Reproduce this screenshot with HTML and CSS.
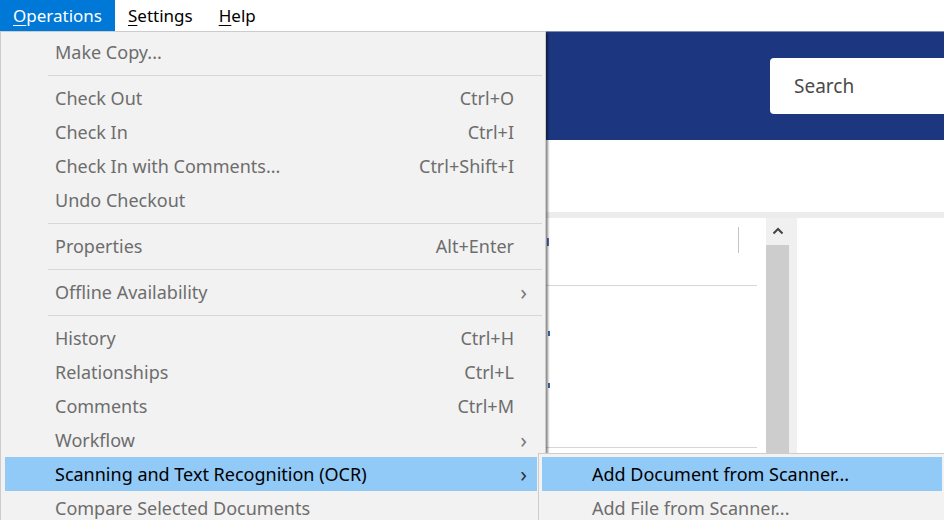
FILE: index.html
```html
<!DOCTYPE html>
<html lang="en">
<head>
<meta charset="utf-8">
<title>Documents</title>
<link rel="stylesheet" href="styles.css">
</head>
<body>
<div class="app">
  <nav class="menubar">
    <span class="menubar-item is-open"><u>O</u>perations</span>
    <span class="menubar-item"><u>S</u>ettings</span>
    <span class="menubar-item"><u>H</u>elp</span>
  </nav>

  <header class="masthead">
    <div class="search">Search</div>
  </header>

  <div class="toolbar"></div>

  <div class="workspace">
    <section class="list">
      <div class="list-head">
        <span class="col-mark"></span>
        <span class="col-divider"></span>
      </div>
      <div class="list-rows">
        <span class="row-mark mark-a"></span>
        <span class="row-mark mark-b"></span>
      </div>
    </section>
    <div class="scrollbar">
      <div class="scroll-up">
        <svg width="12" height="8" viewBox="0 0 12 8"><path d="M1.5 6.5 L6 2 L10.5 6.5" fill="none" stroke="#444" stroke-width="2"/></svg>
      </div>
      <div class="scroll-track"><div class="scroll-thumb"></div></div>
    </div>
    <section class="preview"></section>
  </div>
</div>

<!-- Operations dropdown -->
<div class="menu menu-main">
  <div class="item disabled"><span class="label">Make Copy...</span></div>
  <div class="sep"></div>
  <div class="item disabled"><span class="label">Check Out</span><span class="key">Ctrl+O</span></div>
  <div class="item disabled"><span class="label">Check In</span><span class="key">Ctrl+I</span></div>
  <div class="item disabled"><span class="label">Check In with Comments...</span><span class="key">Ctrl+Shift+I</span></div>
  <div class="item disabled"><span class="label">Undo Checkout</span></div>
  <div class="sep"></div>
  <div class="item disabled"><span class="label">Properties</span><span class="key">Alt+Enter</span></div>
  <div class="sep"></div>
  <div class="item disabled has-sub"><span class="label">Offline Availability</span><span class="arrow">&#8250;</span></div>
  <div class="sep"></div>
  <div class="item disabled"><span class="label">History</span><span class="key">Ctrl+H</span></div>
  <div class="item disabled"><span class="label">Relationships</span><span class="key">Ctrl+L</span></div>
  <div class="item disabled"><span class="label">Comments</span><span class="key">Ctrl+M</span></div>
  <div class="item disabled has-sub"><span class="label">Workflow</span><span class="arrow">&#8250;</span></div>
  <div class="item active has-sub"><span class="label">Scanning and Text Recognition (OCR)</span><span class="arrow">&#8250;</span></div>
  <div class="item disabled"><span class="label">Compare Selected Documents</span></div>
</div>

<!-- Scanning submenu -->
<div class="menu menu-sub">
  <div class="item active"><span class="label">Add Document from Scanner...</span></div>
  <div class="item disabled"><span class="label">Add File from Scanner...</span></div>
</div>
</body>
</html>
```

FILE: styles.css
```css
html, body {
  margin: 0;
  padding: 0;
}

body {
  width: 944px;
  height: 520px;
  overflow: hidden;
  background: #ffffff;
  font-family: "Noto Sans", "Open Sans", sans-serif;
  font-size: 18px;
  color: #000;
}

.app {
  display: flex;
  flex-direction: column;
  height: 520px;
}

/* ---------- menu bar ---------- */
.menubar {
  display: flex;
  height: 31px;
  background: #ffffff;
  font-size: 17px;
}

.menubar-item {
  display: flex;
  align-items: center;
  padding: 0 13px;
  line-height: 31px;
  color: #000;
}

.menubar-item.is-open {
  background: #0078d7;
  color: #fff;
}

.menubar-item u {
  text-decoration-thickness: 1px;
  text-underline-offset: 3px;
}

/* ---------- blue masthead ---------- */
.masthead {
  height: 109px;
  background: #1c367f;
  display: flex;
  align-items: center;
  justify-content: flex-end;
  border-top: 1px solid #7d8cb6;
  box-sizing: border-box;
}

.search {
  width: 190px;
  height: 56px;
  margin-right: -16px;
  background: #fff;
  border-radius: 4px;
  box-sizing: border-box;
  padding-left: 24px;
  display: flex;
  align-items: center;
  font-size: 19px;
  color: #4a4a4a;
}

.toolbar {
  height: 72px;
  background: #fff;
}

/* ---------- document list area ---------- */
.workspace {
  flex: 1;
  display: flex;
  border-top: 6px solid #ececec;
}

.list {
  width: 757px;
  display: flex;
  flex-direction: column;
  margin-right: 9px;
}

.list-head {
  height: 67px;
  border-bottom: 1px solid #d6d6d6;
  display: flex;
  align-items: flex-start;
}

.col-mark {
  width: 2px;
  height: 8px;
  margin: 20px 0 0 547px;
  background: #4f6fa6;
}

.col-divider {
  width: 1px;
  height: 26px;
  margin-top: 9px;
  margin-left: 189px;
  background: #c4c4c4;
}

.list-rows {
  height: 161px;
  border-bottom: 1px solid #d6d6d6;
  position: relative;
}

.row-mark {
  position: absolute;
  left: 548px;
  width: 2px;
  height: 5px;
  background: #3f66a8;
}

.mark-a { top: 45px; }
.mark-b { top: 97px; }

/* ---------- scrollbar ---------- */
.scrollbar {
  width: 31px;
  display: flex;
  flex-direction: column;
  background: #f0f0f0;
}

.scroll-up {
  height: 27px;
  display: flex;
  align-items: center;
  justify-content: flex-start;
  padding-left: 6px;
  padding-bottom: 2px;
  box-sizing: border-box;
}

.scroll-track {
  flex: 1;
  display: flex;
}

.scroll-thumb {
  width: 23px;
  background: #cdcdcd;
}

.preview {
  flex: 1;
  background: #fff;
}

/* ---------- popup menus ---------- */
.menu {
  position: absolute;
  box-sizing: border-box;
  background: #f2f2f2;
  border: 1px solid #cccccc;
  padding: 3px 0;
}

.menu-main {
  left: 0;
  top: 31px;
  width: 546px;
  height: 500px;
  box-shadow: 2px 2px 2px rgba(0, 0, 0, 0.45);
}

.menu-sub {
  left: 538px;
  top: 453px;
  width: 412px;
  border-right: none;
}

.item {
  height: 34px;
  margin: 0 8px 0 4px;
  padding: 0 23px 0 50px;
  display: flex;
  align-items: center;
  justify-content: space-between;
  white-space: nowrap;
  line-height: 34px;
}

.menu-sub .item {
  margin-left: 3px;
  margin-right: 8px;
}

.item.disabled {
  color: #6d6d6d;
}

.item.active {
  background: #91c9f7;
  color: #000;
}

.item .key {
  color: #6d6d6d;
}

.item.has-sub {
  padding-right: 10px;
}

.arrow {
  font-size: 22px;
  color: #7a7a7a;
  line-height: 34px;
  margin-top: -2px;
}

.item.active .arrow {
  color: #333;
}

.sep {
  height: 12px;
  margin: 0 3px 0 47px;
  position: relative;
}

.sep::after {
  content: "";
  position: absolute;
  left: 0;
  right: 0;
  top: 6px;
  height: 1px;
  background: #d7d7d7;
}
```
